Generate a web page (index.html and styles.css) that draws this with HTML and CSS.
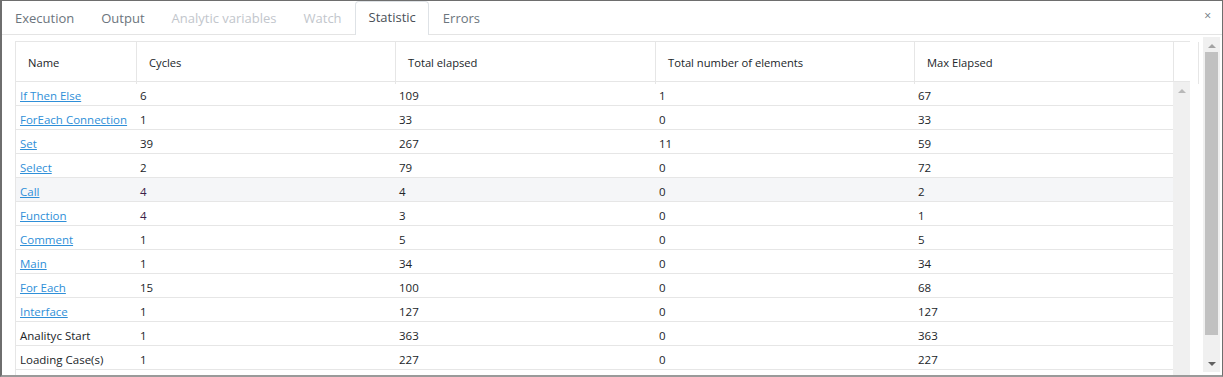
FILE: index.html
```html
<!DOCTYPE html>
<html>
<head>
    <title>Statistic</title>
    <link rel="stylesheet" href="styles.css">
</head>
<body>
    <div class="panel">
        <div class="tabs">
            <span class="tab">Execution</span>
            <span class="tab">Output</span>
            <span class="tab disabled">Analytic variables</span>
            <span class="tab disabled">Watch</span>
            <span class="tab active">Statistic</span>
            <span class="tab">Errors</span>
            <span class="close">×</span>
        </div>

        <div class="content">
            <div class="grid-wrap">
                <div class="grid-head">
                    <div class="row">
                        <div class="th">Name</div>
                        <div class="th">Cycles</div>
                        <div class="th">Total elapsed</div>
                        <div class="th">Total number of elements</div>
                        <div class="th">Max Elapsed</div>
                        <div class="th spacer"></div>
                    </div>
                </div>
                <div class="grid-body">
                    <div class="rows">
                        <div class="row"><div class="td"><a href="#">If Then Else</a></div><div class="td">6</div><div class="td">109</div><div class="td">1</div><div class="td">67</div></div>
                        <div class="row"><div class="td"><a href="#">ForEach Connection</a></div><div class="td">1</div><div class="td">33</div><div class="td">0</div><div class="td">33</div></div>
                        <div class="row"><div class="td"><a href="#">Set</a></div><div class="td">39</div><div class="td">267</div><div class="td">11</div><div class="td">59</div></div>
                        <div class="row"><div class="td"><a href="#">Select</a></div><div class="td">2</div><div class="td">79</div><div class="td">0</div><div class="td">72</div></div>
                        <div class="row hover"><div class="td"><a href="#">Call</a></div><div class="td num">4</div><div class="td">4</div><div class="td">0</div><div class="td">2</div></div>
                        <div class="row"><div class="td"><a href="#">Function</a></div><div class="td num">4</div><div class="td">3</div><div class="td">0</div><div class="td">1</div></div>
                        <div class="row"><div class="td"><a href="#">Comment</a></div><div class="td">1</div><div class="td">5</div><div class="td">0</div><div class="td">5</div></div>
                        <div class="row"><div class="td"><a href="#">Main</a></div><div class="td">1</div><div class="td">34</div><div class="td">0</div><div class="td">34</div></div>
                        <div class="row"><div class="td"><a href="#">For Each</a></div><div class="td">15</div><div class="td">100</div><div class="td">0</div><div class="td">68</div></div>
                        <div class="row"><div class="td"><a href="#">Interface</a></div><div class="td">1</div><div class="td">127</div><div class="td">0</div><div class="td">127</div></div>
                        <div class="row"><div class="td">Analityc Start</div><div class="td">1</div><div class="td">363</div><div class="td">0</div><div class="td">363</div></div>
                        <div class="row"><div class="td">Loading Case(s)</div><div class="td">1</div><div class="td">227</div><div class="td">0</div><div class="td">227</div></div>
                    </div>
                    <div class="scrollbar inner">
                        <span class="arrow up"></span>
                    </div>
                </div>
            </div>

            <div class="scrollbar outer">
                <span class="arrow up"></span>
                <div class="thumb"></div>
                <span class="arrow down"></span>
            </div>
        </div>
    </div>
</body>
</html>
```

FILE: styles.css
```css
body {
    margin: 0;
    font-family: "Open Sans", "Noto Sans", Arial, sans-serif;
    background-color: #ffffff;
    color: #212529;
}
.panel {
    width: 1223px;
    height: 377px;
    box-sizing: border-box;
    border: 1px solid #6e6e6e;
    border-left-width: 2px;
    border-bottom: 2px solid #9a9a9a;
    display: flex;
    flex-direction: column;
    overflow: hidden;
}
.tabs {
    height: 33px;
    flex-shrink: 0;
    display: flex;
    align-items: flex-end;
    border-bottom: 1px solid #e4e4e4;
    position: relative;
}
.tab {
    height: 32px;
    line-height: 31px;
    padding: 0 12.5px;
    font-size: 13px;
    color: #6c757d;
    border: 1px solid transparent;
    border-bottom: none;
    margin-bottom: -1px;
    border-radius: 4px 4px 0 0;
}
.tab:first-child {
    padding-left: 12px;
}
.tab.disabled {
    color: #c2c6cc;
}
.tab.active {
    color: #495057;
    background-color: #ffffff;
    border-color: #dee2e6;
    height: 33px;
}
.close {
    position: absolute;
    right: 11px;
    top: 6px;
    font-size: 12px;
    color: #6c757d;
}
.content {
    flex: 1;
    display: flex;
    min-height: 0;
}
.grid-wrap {
    margin: 6px 0 0 13px;
    width: 1175px;
    display: flex;
    flex-direction: column;
    min-height: 0;
}
.row {
    display: grid;
    grid-template-columns: 121px 259px 260px 259px 259px;
    font-size: 11.5px;
}
.grid-head .row {
    grid-template-columns: 121px 259px 260px 259px 259px 17px;
    border-top: 1px solid #e6e6e6;
    border-left: 1px solid #e6e6e6;
    border-bottom: 1px solid #e6e6e6;
    height: 39px;
    font-size: 11.2px;
}
.th {
    border-right: 1px solid #e6e6e6;
    padding: 0 12px;
    line-height: 42px;
    color: #212529;
}
.grid-body {
    flex: 1;
    display: flex;
    min-height: 0;
}
.rows {
    width: 1158px;
    border-left: 1px solid #e6e6e6;
    box-sizing: border-box;
}
.grid-body .row {
    height: 23px;
    border-bottom: 1px solid #e6e6e6;
}
.grid-body .row.hover {
    background-color: #f5f6f8;
}
.td {
    padding: 0 3px;
    line-height: 27px;
    white-space: nowrap;
    overflow: hidden;
}
.td:first-child {
    padding-left: 4px;
}
.td.num {
    color: #3b1f4a;
}
.td a {
    color: #2f8fd8;
    text-decoration: underline;
}
.scrollbar {
    width: 17px;
    background-color: #f0f0f0;
    position: relative;
    flex-shrink: 0;
}
.scrollbar.outer {
    margin: 2px 0 3px 13px;
}
.arrow {
    position: absolute;
    left: 5px;
    width: 0;
    height: 0;
    border-left: 4px solid transparent;
    border-right: 4px solid transparent;
}
.arrow.up {
    top: 7px;
    border-bottom: 4px solid #a3a3a3;
}
.scrollbar.inner .arrow.up {
    border-bottom-color: #b8b8b8;
}
.arrow.down {
    bottom: 6px;
    border-top: 4px solid #606060;
}
.thumb {
    position: absolute;
    top: 15px;
    left: 2px;
    right: 2px;
    bottom: 37px;
    background-color: #c1c1c1;
}
```
